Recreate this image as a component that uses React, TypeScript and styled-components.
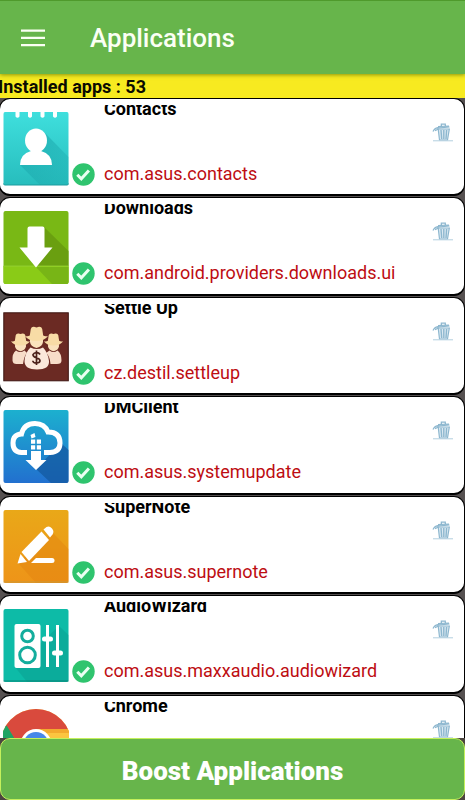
import React from "react";
import styled, { createGlobalStyle } from "styled-components";

const GlobalStyle = createGlobalStyle`
  * { box-sizing: border-box; }
  html, body { margin: 0; padding: 0; overflow: hidden; }
  body { font-family: Roboto, "Liberation Sans", sans-serif; background: #555050; }
`;

const Page = styled.div`
  display: flex;
  flex-direction: column;
  height: 100vh;
  overflow: hidden;
`;

const Toolbar = styled.header`
  display: flex;
  align-items: center;
  gap: 44px;
  flex: none;
  height: 74px;
  padding: 1px 20px 0;
  background: #67b54b;
  border-top: 1px solid #4f9a2c;
  box-shadow: 0 1px 4px rgba(60, 90, 0, 0.6);
  z-index: 1;
`;

const MenuButton = styled.button`
  display: flex;
  padding: 0;
  border: 0;
  background: none;
  cursor: pointer;
`;

const Title = styled.h1`
  margin: 0;
  color: #fbfff4;
  font-size: 26px;
  line-height: 32px;
  font-weight: 500;
`;

const Summary = styled.p`
  flex: none;
  margin: 0 0 0 -2px;
  height: 24px;
  background: #f7ea20;
  color: #0b0b00;
  font-size: 18px;
  line-height: 26px;
  font-weight: 700;
`;

const AppList = styled.ul`
  flex: 1;
  min-height: 0;
  display: flex;
  flex-direction: column;
  gap: 1px;
  margin: 0;
  padding: 0;
  list-style: none;
  overflow-y: auto;
  overflow-x: hidden;
  scrollbar-width: none;
`;

const Card = styled.li`
  display: flex;
  flex: none;
  height: 98px;
  margin: 0 0 0 -1px;
  padding: 6px 10px 0 3px;
  background: #fff;
  border: 1px solid #000;
  border-bottom-width: 2px;
  border-radius: 11px;
  &:nth-child(even) { height: 99px; }
`;

const Media = styled.div`
  display: flex;
  align-items: flex-end;
  gap: 3px;
  width: 101px;
  height: 81px;
  flex: none;
`;

const Details = styled.div`
  flex: 1;
  min-width: 0;
`;

const AppName = styled.h2`
  margin: 0;
  height: 16px;
  overflow: hidden;
  color: #000;
  font-size: 18px;
  line-height: 8px;
  font-weight: 700;
`;

const PackageName = styled.p`
  margin: 40px 0 0;
  color: #bd0d12;
  font-size: 18px;
  line-height: 25px;
  white-space: nowrap;
`;

const DeleteButton = styled.button`
  display: flex;
  align-self: flex-start;
  margin-top: 18px;
  padding: 0;
  border: 0;
  background: none;
  cursor: pointer;
`;

const Footer = styled.footer`
  flex: none;
  display: flex;
  background: #4c4540;
`;

const BoostButton = styled.button`
  flex: 1;
  height: 62px;
  padding: 3px 0 0;
  border: 1px solid #c4f05c;
  border-radius: 10px;
  background: #67b54b;
  color: #fff;
  font-family: Roboto, "Liberation Sans", sans-serif;
  font-size: 26px;
  font-weight: 900;
  cursor: pointer;
`;

const MenuIcon = () => (
  <svg width="26" height="18" viewBox="0 0 26 18" aria-hidden="true">
    <path d="M1 1.700h24M1 8.900h24M1 16.100h24" stroke="#fbfff4" strokeWidth="2.300" />
  </svg>
);

const CheckIcon = () => (
  <svg width="23" height="23" viewBox="0 0 23 23" role="img" aria-label="Selected">
    <circle cx="11.500" cy="11.500" r="11.200" fill="#2fc46e" />
    <path d="M5.300 11.700l4 4.100 7.600-8.400" fill="none" stroke="#eafff2" strokeWidth="3" />
  </svg>
);

const TrashIcon = () => (
  <svg width="22" height="19" viewBox="0 0 22 19" aria-hidden="true">
    <g fill="none" stroke="#8db7cf" strokeWidth="1.200">
      <path d="M5 5.200L17.500 4M6 3.600l11-.6M9.300 3V1.200h4V3" />
      <path d="M6.200 6l1.300 11h8L17.300 6z" fill="#dbe9f1" />
      <path d="M9 7l.7 9M11.800 7v9M14.600 7l-.6 9" strokeWidth="1.400" />
      <path d="M1 8.500C2 6 4 4.600 7 4.600M3 7.600l3-1.300" />
    </g>
    <path d="M1 17.800h20" stroke="#b3cfdf" />
  </svg>
);

type IconFrameProps = { children: React.ReactNode };

const IconFrame = ({ children }: IconFrameProps) => (
  <svg width="66" height="75" viewBox="0 0 66 75" aria-hidden="true">
    {children}
  </svg>
);

const ContactsIcon = () => (
  <IconFrame>
    <defs>
      <linearGradient id="contacts" x2="0" y2="1">
        <stop stopColor="#3fdfdd" />
        <stop offset="1" stopColor="#27bdbd" />
      </linearGradient>
      <linearGradient id="contactsShade" x2="1" y2="1">
        <stop stopColor="#1ba6ab" />
        <stop offset="1" stopColor="#1ba6ab" stopOpacity=".3" />
      </linearGradient>
    </defs>
    <path d="M2 1h10.500v4.500q2 2.500 4 0V1h8.500v4.500q2 2.500 4 0V1h8.500v4.500q2 2.500 4 0V1h8.500v4.500q2 2.500 4 0V1H64q1.500 0 1.500 2v69q0 2-1.500 2H2q-1.500 0-1.500-2V3Q.5 1 2 1z" fill="url(#contacts)" />
    <path d="M42 22l23.500 24v26q0 2-1.500 2H37L17 54z" fill="url(#contactsShade)" opacity=".7" />
    <path d="M.5 72.500q0 1.500 1.500 1.500h62q1.500 0 1.500-1.500" fill="none" stroke="#1c9c9f" />
    <ellipse cx="33" cy="29.500" rx="11" ry="12" fill="#fff" />
    <path d="M17 54q0-11 11-14h10q11 3 11 14z" fill="#fff" />
  </IconFrame>
);

const DownloadsIcon = () => (
  <IconFrame>
    <rect x=".5" y="1" width="65" height="73" rx="2" fill="#79b815" />
    <path d="M.5 56h65v16q0 2-2 2h-61q-2 0-2-2z" fill="#8acb17" />
    <path d="M41 17l24.500 24v15H33z" fill="#6a9f10" />
    <path d="M33 57h32.500v15q0 2-2 2H49z" fill="#78b516" />
    <path d="M.5 56h65" stroke="#9bd63c" strokeWidth=".7" />
    <path d="M24.500 18.500q0-2 2-2h13q2 0 2 2v19h8L33 57.500 16.500 37.500h8z" fill="#fff" />
  </IconFrame>
);

const HatMan = () => (
  <>
    <path d="M-6.500 1.500h13v3Q6 9 0 10.500-6 9-6.500 4.500z" fill="#fae2bd" />
    <path d="M-11.500-1.500q3 .8 4.800-.5l1-6.500q.6-2.500 3.200-2.300L0-10l2.500-.8q2.600-.2 3.200 2.300l1 6.500q1.800 1.300 4.800.5Q8 3.500 0 3.500t-11.500-5z" fill="#f8dca6" />
  </>
);

const SettleUpIcon = () => (
  <IconFrame>
    <rect x=".8" y="2.800" width="64.500" height="68" fill="#6b2a23" stroke="#3c1410" />
    <path d="M13 40.500q-4 3-3.500 10 .3 3.500 4 3.500H20q1-8 4-11l-2.500-2.500q-4.500 3-8.500 0zM46.500 40.500l-3.500 2.500q4 3 4.500 11h6.500q4.500 0 4.500-3.500 0-7-4-10-4 3-8 0z" fill="#f7dcc8" />
    <g transform="translate(17.500 32.500) scale(.84)"><HatMan /></g>
    <g transform="translate(50.500 32.500) scale(.84)"><HatMan /></g>
    <path d="M27.500 37.500q-5.500 5-6 13.500 0 8.500 12.500 8.500T46 51q-1-8.500-6-13.500-6 3-12.500 0z" fill="#fbe8db" />
    <g transform="translate(33.500 27.500)"><HatMan /></g>
    <path d="M37 44.500q-1-2-3.500-2t-3.500 2.200q0 2 3.500 3t3.500 3.100q0 2.200-3.500 2.200t-3.700-2.300M33.500 40.500v14.500" fill="none" stroke="#4b211b" strokeWidth="1.700" />
  </IconFrame>
);

const DmClientIcon = () => (
  <IconFrame>
    <defs>
      <linearGradient id="dmclient" x2="0" y2="1">
        <stop stopColor="#1cb0cf" />
        <stop offset="1" stopColor="#2270cf" />
      </linearGradient>
    </defs>
    <rect x=".5" y="1" width="65" height="73" rx="2" fill="url(#dmclient)" />
    <path d="M58 34l7.500 7v31q0 2-2 2H48L33 60z" fill="#1459a0" opacity=".75" />
    <path d="M24 43.500h-5.500Q10 43 10 34q0-8.500 8.500-9Q21 14.500 32 14.500q9.500 0 13 8.500 12 0 12 11 0 9-10 9.500h-6" fill="none" stroke="#fff" strokeWidth="5" />
    <path d="M28 42h10v9h5.500L33 61 22.500 51H28z" fill="#fff" />
    <path d="M27.500 26l4-2 1 4-4 1.500zM28 30.500h4.200v4.200H28zM33.800 30.500H38v4.200h-4.200zM28 36.200h4.200v4.200H28zM33.800 36.200H38v4.200h-4.200z" fill="#fff" />
  </IconFrame>
);

const SuperNoteIcon = () => (
  <IconFrame>
    <defs>
      <linearGradient id="supernote" x2="0" y2="1">
        <stop stopColor="#e9a818" />
        <stop offset="1" stopColor="#ee9418" />
      </linearGradient>
    </defs>
    <rect x=".5" y="1" width="65" height="73" rx="2" fill="url(#supernote)" />
    <path d="M50 24l15.500 16v32q0 2-2 2H33L15 54z" fill="#e27f10" opacity=".4" />
    <path d="M.5 73h65" stroke="#c9983a" />
    <path d="M40.500 20.500l3-2.500q3-1.500 5.500 1.500t.5 6l-2.500 3z" fill="#fff" />
    <path d="M38.500 22.500l7.500 8.500-20 21-7.500-9z" fill="#fff" />
    <path d="M17.500 45l6.500 8-9.500 1.500z" fill="#fff" />
    <path d="M28 54l5-5h16q2.500 0 2.500 2.500T49 54z" fill="#fff" />
  </IconFrame>
);

const AudioWizardIcon = () => (
  <IconFrame>
    <rect x=".5" y="1" width="65" height="73" rx="2" fill="#0dbba7" />
    <path d="M56 18l9.500 9v45q0 2-2 2H24L12 59z" fill="#099b8e" opacity=".45" />
    <path d="M.5 73h65" stroke="#0b8579" />
    <rect x="11.500" y="16" width="26" height="44" rx="2" fill="#fff" />
    <g fill="none" stroke="#14ad9d" strokeWidth="3">
      <circle cx="24.500" cy="28" r="5.800" />
      <circle cx="24.500" cy="47" r="7.800" />
    </g>
    <path d="M44.500 17v42M54.500 17v42" stroke="#fff" strokeWidth="3" />
    <path d="M41.500 31h6M51.500 45h6" stroke="#fff" strokeWidth="5" strokeLinecap="round" />
  </IconFrame>
);

const ChromeIcon = () => (
  <IconFrame>
    <defs>
      <clipPath id="chromeDisc">
        <ellipse cx="33" cy="38" rx="36" ry="37" />
      </clipPath>
    </defs>
    <g clipPath="url(#chromeDisc)">
      <rect width="66" height="75" fill="#fbc540" />
      <path d="M0 0h66v21H33L18 42 0 17z" fill="#d94a3d" />
      <path d="M0 17l4 1 15 25 14 12-9 20H0z" fill="#1fa463" />
      <path d="M33 21h33v4H44z" fill="#f3a92e" />
      <ellipse cx="33" cy="38" rx="16" ry="17" fill="#fff" />
      <ellipse cx="33" cy="38" rx="13" ry="14" fill="#4688e8" />
    </g>
  </IconFrame>
);

const apps = [
  { name: "Contacts", pkg: "com.asus.contacts", Icon: ContactsIcon },
  { name: "Downloads", pkg: "com.android.providers.downloads.ui", Icon: DownloadsIcon },
  { name: "Settle Up", pkg: "cz.destil.settleup", Icon: SettleUpIcon },
  { name: "DMClient", pkg: "com.asus.systemupdate", Icon: DmClientIcon },
  { name: "SuperNote", pkg: "com.asus.supernote", Icon: SuperNoteIcon },
  { name: "AudioWizard", pkg: "com.asus.maxxaudio.audiowizard", Icon: AudioWizardIcon },
  { name: "Chrome", pkg: "", Icon: ChromeIcon },
];

export default function App() {
  return (
    <Page>
      <GlobalStyle />
      <Toolbar>
        <MenuButton aria-label="Open menu">
          <MenuIcon />
        </MenuButton>
        <Title>Applications</Title>
      </Toolbar>
      <Summary>Installed apps : 53</Summary>
      <AppList>
        {apps.map(({ name, pkg, Icon }) => (
          <Card key={name}>
            <Media>
              <Icon />
              <CheckIcon />
            </Media>
            <Details>
              <AppName>{name}</AppName>
              {pkg && <PackageName>{pkg}</PackageName>}
            </Details>
            <DeleteButton aria-label={`Uninstall ${name}`}>
              <TrashIcon />
            </DeleteButton>
          </Card>
        ))}
      </AppList>
      <Footer>
        <BoostButton>Boost Applications</BoostButton>
      </Footer>
    </Page>
  );
}
